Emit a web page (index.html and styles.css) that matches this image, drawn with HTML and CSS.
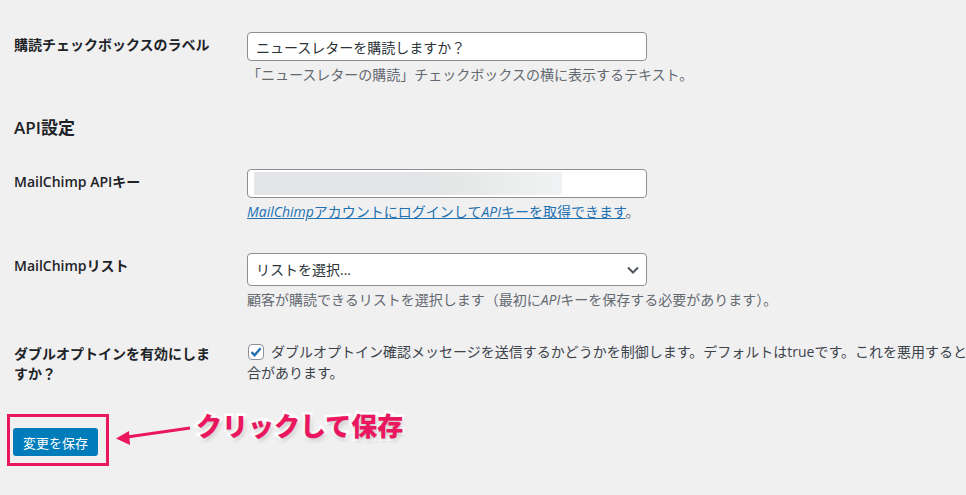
FILE: index.html
```html
<!DOCTYPE html>
<html lang="ja">
<head>
    <meta charset="utf-8">
    <title>MailChimp設定</title>
    <link rel="stylesheet" href="styles.css">
</head>
<body>
    <div class="wrap">
        <div class="field-row">
            <div class="field-label">購読チェックボックスのラベル</div>
            <div class="field-body">
                <input class="text-input" type="text" value="ニュースレターを購読しますか？">
                <p class="description">「ニュースレターの購読」チェックボックスの横に表示するテキスト。</p>
            </div>
        </div>

        <h2 class="section-title">API設定</h2>

        <div class="field-row">
            <div class="field-label">MailChimp APIキー</div>
            <div class="field-body">
                <div class="text-input key-input"><span class="key-blur"></span></div>
                <p class="description"><a href="#"><i>MailChimp</i>アカウントにログインして<i>API</i>キーを取得できます</a>。</p>
            </div>
        </div>

        <div class="field-row">
            <div class="field-label">MailChimpリスト</div>
            <div class="field-body">
                <div class="select-box">
                    <span>リストを選択...</span>
                    <svg class="chevron" width="14" height="10" viewBox="0 0 14 10"><path d="M2 2.5 L7 7.5 L12 2.5" fill="none" stroke="#50575e" stroke-width="2"/></svg>
                </div>
                <p class="description">顧客が購読できるリストを選択します（最初に<i>API</i>キーを保存する必要があります）。</p>
            </div>
        </div>

        <div class="field-row">
            <div class="field-label">ダブルオプトインを有効にしますか？</div>
            <div class="field-body wide">
                <p class="check-text"><span class="checkbox"><svg width="14" height="14" viewBox="0 0 14 14"><path d="M2.5 7.2 L5.6 10.2 L11.6 3.2" fill="none" stroke="#2271b1" stroke-width="2.4"/></svg></span>ダブルオプトイン確認メッセージを送信するかどうかを制御します。デフォルトはtrueです。これを悪用すると、MailChimpアカウントが停止される場<br>合があります。</p>
            </div>
        </div>

        <div class="submit-area">
            <button class="button-primary" type="button">変更を保存</button>
            <span class="highlight-box"></span>
            <svg class="arrow" width="90" height="30" viewBox="0 0 90 30"><path d="M76 6 L6 16" stroke="#ea1760" stroke-width="3" fill="none"/><path d="M2 16.5 L15 9 L16 23 Z" fill="#ea1760"/></svg>
            <span class="callout">クリックして保存</span>
        </div>
    </div>
</body>
</html>
```

FILE: styles.css
```css
body {
    margin: 0;
    background-color: #f0f0f1;
    font-family: "Open Sans", "Noto Sans CJK JP", sans-serif;
    font-size: 14px;
    color: #1d2327;
    overflow: hidden;
}

.wrap {
    padding: 32px 0 0 14px;
    width: 1400px;
}

.field-row {
    display: grid;
    grid-template-columns: 233px 1fr;
    margin-bottom: 31px;
}

.field-label {
    font-weight: 600;
    line-height: 20px;
    padding-top: 3px;
    width: 200px;
}

.field-body {
    width: 400px;
}

.field-body.wide {
    width: auto;
}

.text-input {
    display: block;
    box-sizing: border-box;
    width: 400px;
    height: 29px;
    padding: 0 8px;
    border: 1px solid #8c8f94;
    border-radius: 4px;
    background: #fff;
    font-family: inherit;
    font-size: 14px;
    color: #2c3338;
}

.key-input {
    padding: 2px 0 2px 6px;
}

.key-blur {
    display: block;
    width: 308px;
    height: 23px;
    background: linear-gradient(90deg, #e4e5e6 0%, #e2e4e5 55%, #eceded 85%, #f1f2f3 100%);
}

.description {
    margin: 4px 0 0;
    line-height: 20px;
    color: #646970;
    white-space: nowrap;
}

.description a {
    color: #2271b1;
    text-decoration: underline;
}

.section-title {
    margin: 0 0 29px;
    font-size: 17px;
    line-height: 24px;
    font-weight: 600;
    color: #1d2327;
}

.select-box {
    position: relative;
    box-sizing: border-box;
    width: 400px;
    height: 33px;
    padding: 0 8px;
    border: 1px solid #8c8f94;
    border-radius: 4px;
    background: #fff;
    line-height: 31px;
    color: #2c3338;
}

.chevron {
    position: absolute;
    right: 6px;
    top: 11px;
}

.check-text {
    margin: 0;
    line-height: 21px;
    color: #3c434a;
    white-space: nowrap;
}

.checkbox {
    display: inline-block;
    box-sizing: border-box;
    width: 16px;
    height: 16px;
    margin: 0 7px 0 1px;
    vertical-align: -3px;
    border: 1px solid #8c8f94;
    border-radius: 4px;
    background: #fff;
}

.checkbox svg {
    display: block;
    margin: 0;
}

.submit-area {
    position: relative;
    margin-top: 44px;
    height: 60px;
}

.button-primary {
    margin: 0 0 0 -1px;
    height: 28px;
    padding: 0 10px;
    border: none;
    border-radius: 3px;
    background: #007cba;
    color: #fff;
    font-family: inherit;
    font-size: 13px;
}

.highlight-box {
    position: absolute;
    left: -7px;
    top: -14px;
    width: 96px;
    height: 46px;
    border: 3px solid #ea1760;
}

.arrow {
    position: absolute;
    left: 100px;
    top: -6px;
}

.callout {
    position: absolute;
    left: 182px;
    top: -22px;
    font-family: "Noto Sans CJK JP", sans-serif;
    font-size: 26px;
    font-weight: 900;
    color: #ea1760;
    -webkit-text-stroke: 5px #fff;
    paint-order: stroke fill;
    text-shadow: 1px 2px 4px rgba(0, 0, 0, 0.25);
    white-space: nowrap;
}
```
